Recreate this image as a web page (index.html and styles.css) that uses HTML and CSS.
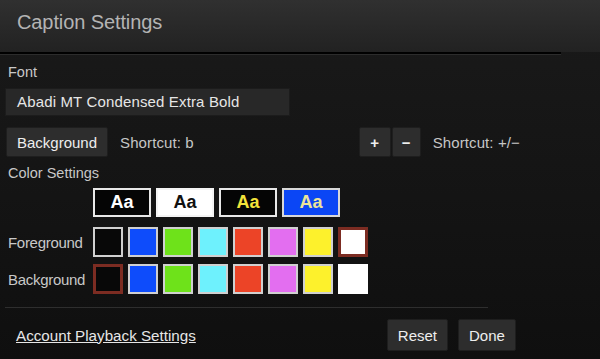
FILE: index.html
```html
<!DOCTYPE html>
<html lang="en">
<head>
    <meta charset="UTF-8">
    <title>Caption Settings</title>
    <link rel="stylesheet" href="styles.css">
</head>
<body>
    <div class="panel">
        <div class="header">
            <h1>Caption Settings</h1>
        </div>
        <div class="rule"></div>

        <div class="content">
            <div class="label">Font</div>
            <div class="font-field">Abadi MT Condensed Extra Bold</div>

            <div class="toolbar">
                <button class="btn">Background</button>
                <span class="shortcut">Shortcut: b</span>
                <div class="size-group">
                    <button class="btn btn-small">+</button>
                    <button class="btn btn-small">&minus;</button>
                </div>
                <span class="shortcut">Shortcut: +/&minus;</span>
            </div>

            <div class="label label-colors">Color Settings</div>

            <div class="color-grid">
                <span></span>
                <div class="presets">
                    <div class="preset preset-1">Aa</div>
                    <div class="preset preset-2">Aa</div>
                    <div class="preset preset-3">Aa</div>
                    <div class="preset preset-4">Aa</div>
                </div>

                <span class="row-label">Foreground</span>
                <div class="swatches">
                    <div class="swatch c-black"></div>
                    <div class="swatch c-blue"></div>
                    <div class="swatch c-green"></div>
                    <div class="swatch c-cyan"></div>
                    <div class="swatch c-red"></div>
                    <div class="swatch c-pink"></div>
                    <div class="swatch c-yellow"></div>
                    <div class="swatch c-white selected"></div>
                </div>

                <span class="row-label">Background</span>
                <div class="swatches">
                    <div class="swatch c-black selected"></div>
                    <div class="swatch c-blue"></div>
                    <div class="swatch c-green"></div>
                    <div class="swatch c-cyan"></div>
                    <div class="swatch c-red"></div>
                    <div class="swatch c-pink"></div>
                    <div class="swatch c-yellow"></div>
                    <div class="swatch c-white plain"></div>
                </div>
            </div>

            <div class="separator"></div>

            <div class="footer">
                <a class="account-link" href="#">Account Playback Settings</a>
                <div class="actions">
                    <button class="btn btn-footer">Reset</button>
                    <button class="btn btn-footer">Done</button>
                </div>
            </div>
        </div>
    </div>
</body>
</html>
```

FILE: styles.css
```css
* {
    margin: 0;
    padding: 0;
    box-sizing: border-box;
    font-family: 'Liberation Sans', Arial, sans-serif;
}

body {
    width: 600px;
    height: 359px;
    overflow: hidden;
    background: #111;
}

.panel {
    height: 359px;
    background: linear-gradient(#1a1a1a, #0f0f0f);
}

.header {
    height: 52px;
    padding: 11px 0 0 17px;
    background: linear-gradient(#303030, #222);
}

h1 {
    color: #b4b4b4;
    font-size: 20px;
    font-weight: normal;
    letter-spacing: -0.1px;
}

.rule {
    width: 561px;
    height: 3px;
    border-top: 2px solid #000;
    border-bottom: 1px solid #2c2c2c;
}

.content {
    padding: 0 5px;
}

.label {
    color: #c8c8c8;
    font-size: 14.5px;
    padding: 9px 0 0 3px;
    height: 33px;
}

.font-field {
    width: 285px;
    height: 28px;
    background: #282828;
    border: 1px solid #1c1c1c;
    color: #e6e6e6;
    font-size: 15px;
    line-height: 26px;
    padding-left: 11px;
    letter-spacing: 0.15px;
}

.toolbar {
    display: flex;
    align-items: center;
    margin-top: 11px;
    height: 30px;
}

.btn {
    background: #2d2d2d;
    border: 1px solid #1e1e1e;
    border-radius: 2px;
    color: #eee;
    font-size: 15px;
    height: 30px;
    padding: 0 10px;
    margin-left: 1px;
    cursor: pointer;
}

.shortcut {
    color: #c6c6c6;
    font-size: 15px;
    margin-left: 12px;
    letter-spacing: 0.1px;
}

.size-group {
    display: flex;
    margin-left: 165px;
}

.btn-small {
    width: 32px;
    padding: 0;
    margin-left: 0;
    font-weight: bold;
    font-size: 15px;
}

.btn-small + .btn-small {
    width: 29px;
    margin-left: 1px;
}

.label-colors {
    padding-top: 8px;
    height: 31px;
}

.color-grid {
    display: grid;
    grid-template-columns: 88px auto;
    row-gap: 7px;
    align-items: center;
}

.row-label {
    color: #c8c8c8;
    font-size: 15px;
    padding-left: 3px;
    letter-spacing: -0.3px;
}

.presets {
    display: flex;
    gap: 5px;
    margin-bottom: 3px;
}

.preset {
    width: 58px;
    height: 29px;
    border: 2px solid #e8e8e8;
    font-size: 18px;
    font-weight: bold;
    text-align: center;
    line-height: 25px;
}

.preset-1 { background: #050505; color: #fff; }
.preset-2 { background: #fff; color: #111; border-color: #f4f4f4; }
.preset-3 { background: #050505; color: #f2e33a; }
.preset-4 { background: #0b46f5; color: #ece49a; border-color: #d8d8d8; }

.swatches {
    display: flex;
    gap: 5px;
}

.swatch {
    width: 30px;
    height: 30px;
    border: 2px solid #d0d0d0;
}

.swatch.selected {
    border: 3px solid #7c2c22;
}

.swatch.plain {
    border-color: #fff;
}

.c-black { background: #080808; }
.c-blue { background: #0e4cfb; }
.c-green { background: #6ee21a; }
.c-cyan { background: #6ef1fd; }
.c-red { background: #ec4427; }
.c-pink { background: #e36ef0; }
.c-yellow { background: #fdf12c; }
.c-white { background: #fff; }

.separator {
    width: 483px;
    height: 1px;
    background: #2e2e2e;
    margin-top: 13px;
}

.footer {
    display: flex;
    align-items: center;
    margin-top: 11px;
    height: 32px;
}

.account-link {
    color: #e6e6e6;
    font-size: 15.2px;
    margin-left: 11px;
    text-decoration: underline;
}

.actions {
    display: flex;
    gap: 9px;
    margin-left: 190px;
}

.btn-footer {
    height: 32px;
    padding: 0 10px;
    font-size: 15px;
}
```
